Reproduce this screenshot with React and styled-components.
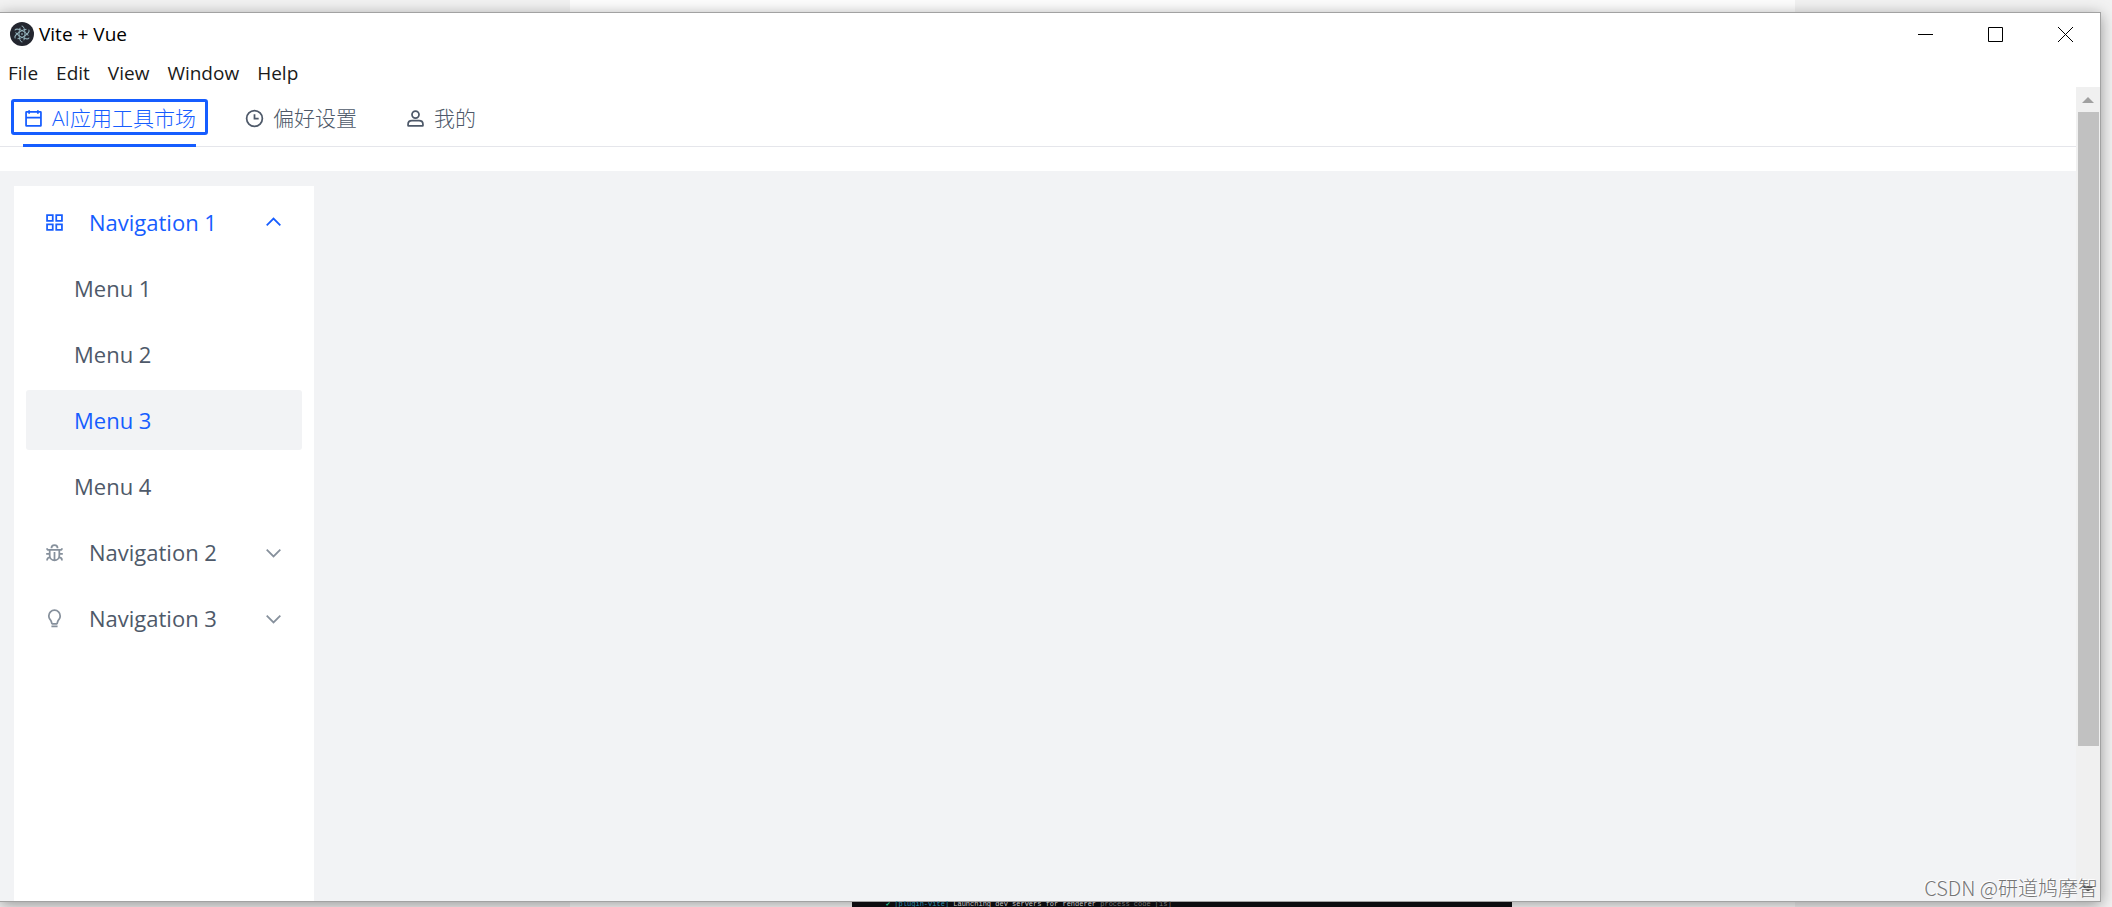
import React, { useState } from "react";
import styled, { createGlobalStyle } from "styled-components";

const BLUE = "#165dff";
const UI_FONT = '"Open Sans", "Noto Sans CJK SC", sans-serif';

const GlobalStyle = createGlobalStyle`
  *, *::before, *::after { box-sizing: border-box; }
  body { margin: 0; font-family: ${UI_FONT}; }
  button { font: inherit; color: inherit; background: none; border: 0; padding: 0; margin: 0; cursor: pointer; }
`;

const Desktop = styled.div`
  position: relative;
  display: flex;
  flex-direction: column;
  height: 100vh;
  padding: 12px 11px 0 0;
  overflow: hidden;
  background: linear-gradient(90deg, #f2f2f2 27%, #fdfdfd 27%, #fdfdfd 85%, #f2f2f2 85%);
`;

const Window = styled.div`
  position: relative;
  z-index: 1;
  flex: 1;
  min-height: 0;
  display: flex;
  flex-direction: column;
  background: #fff;
  border: 1px solid #a2a2a2;
  border-left: 0;
  box-shadow: 0 3px 14px rgba(0, 0, 0, 0.38);
`;

const TitleBar = styled.header`
  flex: none;
  display: flex;
  align-items: center;
  height: 42px;
  padding-left: 10px;
`;

const AppTitle = styled.h1`
  flex: 1;
  margin: 0 0 0 5px;
  font-size: 19px;
  line-height: 24px;
  font-weight: 400;
  color: #000;
`;

const CaptionButton = styled.button`
  display: flex;
  align-items: center;
  justify-content: center;
  width: 70px;
  height: 42px;
`;

const MenuBar = styled.nav`
  flex: none;
  display: flex;
  gap: 18px;
  height: 32px;
  padding-left: 8px;
  font-size: 19px;
  line-height: 36px;
  color: #1a1a1a;
`;

const Viewport = styled.div`
  flex: 1;
  min-height: 0;
  display: flex;
`;

const Page = styled.div`
  flex: 1;
  min-width: 0;
  display: flex;
  flex-direction: column;
`;

const TabBar = styled.div`
  flex: none;
  display: flex;
  gap: 24px;
  height: 60px;
  padding: 12px 11px 0;
  margin-bottom: 24px;
  border-bottom: 1px solid #e5e6eb;
`;

const TabItem = styled.div`
  position: relative;
  height: 48px;
  &::after {
    content: "";
    position: absolute;
    left: 12px;
    right: 12px;
    bottom: 0;
    height: 3px;
    background: ${(p) => (p.$active ? BLUE : "transparent")};
  }
`;

const TabButton = styled.button`
  display: flex;
  align-items: center;
  gap: 8px;
  height: 36px;
  padding: 2px 9px 0;
  border: 3px solid ${(p) => (p.$active ? BLUE : "transparent")};
  border-radius: 3px;
  font-size: 21px;
  line-height: 28px;
  font-weight: 300;
  white-space: nowrap;
  color: ${(p) => (p.$active ? BLUE : "#4e5969")};
`;

const Body = styled.div`
  flex: 1;
  min-height: 0;
  display: flex;
  padding: 15px 14px 0;
  background: #f2f3f5;
`;

const Sidebar = styled.nav`
  width: 300px;
  padding: 6px 12px;
  background: #fff;
`;

const MenuList = styled.ul`
  display: flex;
  flex-direction: column;
  gap: 6px;
  margin: 0;
  padding: 0;
  list-style: none;
`;

const SubList = styled(MenuList)`
  margin-top: 6px;
`;

const GroupButton = styled.button`
  display: flex;
  align-items: center;
  width: 100%;
  height: 60px;
  padding: 0 18px;
  font-size: 22px;
  line-height: 30px;
  text-align: left;
  color: ${(p) => (p.$active ? BLUE : "#4e5969")};
  svg { color: ${(p) => (p.$active ? BLUE : "#86909c")}; }
`;

const GroupLabel = styled.span`
  flex: 1;
  margin-left: 24px;
`;

const EntryButton = styled.button`
  width: 100%;
  height: 60px;
  padding: 0 18px 0 48px;
  border-radius: 3px;
  font-size: 22px;
  line-height: 30px;
  text-align: left;
  color: ${(p) => (p.$active ? BLUE : "#4e5969")};
  background: ${(p) => (p.$active ? "#f2f3f5" : "transparent")};
`;

const Scrollbar = styled.div`
  display: flex;
  flex-direction: column;
  width: 24px;
  background: #f0f0f0;
`;

const ScrollArrow = styled.button`
  flex: none;
  display: flex;
  align-items: center;
  justify-content: center;
  height: 25px;
  color: ${(p) => (p.$dark ? "#505050" : "#a0a0a0")};
`;

const ScrollTrack = styled.div`
  flex: 1;
  padding: 0 1px 0 2px;
`;

const ScrollThumb = styled.div`
  height: 83%;
  background: #c1c1c1;
`;

const DesktopEdge = styled.div`
  position: relative;
  z-index: 2;
  flex: none;
  display: flex;
  height: 5px;
  padding-left: 852px;
`;

const Terminal = styled.div`
  width: 660px;
  padding-left: 34px;
  background: #0c0c0f;
  font-family: "Liberation Mono", "DejaVu Sans Mono", monospace;
  font-size: 7px;
  line-height: 4px;
  white-space: pre;
  color: #c4c4c4;
`;

const Tone = styled.span`
  color: ${(p) => p.$color};
`;

const Watermark = styled.div`
  position: absolute;
  z-index: 3;
  right: 14px;
  bottom: 5px;
  font-family: "Noto Sans CJK SC", sans-serif;
  font-size: 20px;
  line-height: 28px;
  font-weight: 300;
  color: #757575;
  text-shadow: -1px -1px 0 #fff;
  pointer-events: none;
`;

const ICONS = {
  calendar: <path d="M7 22h34M14 5v8m20-8v8M8 41h32a1 1 0 0 0 1-1V10a1 1 0 0 0-1-1H8a1 1 0 0 0-1 1v30a1 1 0 0 0 1 1Z" />,
  clock: <path d="M24 14v10h9.5m8.5 0c0 9.941-8.059 18-18 18S6 33.941 6 24 14.059 6 24 6s18 8.059 18 18Z" />,
  user: (
    <>
      <path d="M7 37c0-4.97 4.03-8 9-8h16c4.97 0 9 3.03 9 8v3a1 1 0 0 1-1 1H8a1 1 0 0 1-1-1v-3Z" />
      <circle cx="24" cy="15" r="8" />
    </>
  ),
  apps: <path d="M7 7h13v13H7zM28 7h13v13H28zM7 28h13v13H7zM28 28h13v13H28z" />,
  bug: <path d="M24 42c-6.075 0-11-4.925-11-11V18h22v13c0 6.075-4.925 11-11 11Zm0 0V23m11 4h8M5 27h8M7 14a4 4 0 0 0 4 4h26a4 4 0 0 0 4-4m0 28v-.5a6.5 6.5 0 0 0-6.5-6.5M7 42v-.5a6.5 6.5 0 0 1 6.5-6.5M17 14a7 7 0 1 1 14 0" />,
  bulb: <path d="M17 42h14m6-24c0 2.823-.9 5.437-2.43 7.568-1.539 2.147-3.185 4.32-3.77 6.897l-.623 2.756A1 1 0 0 1 29.2 36H18.8a1 1 0 0 1-.976-.779l-.624-2.756c-.584-2.576-2.23-4.75-3.77-6.897A12.94 12.94 0 0 1 11 18c0-7.18 5.82-13 13-13s13 5.82 13 13Z" />,
  down: <path d="M39.6 17.443 24.043 33 8.487 17.443" />,
  up: <path d="M39.6 30.557 24.043 15 8.487 30.557" />,
};

function Icon({ name }) {
  return (
    <svg width="21" height="21" viewBox="0 0 48 48" fill="none" stroke="currentColor" strokeWidth="4" aria-hidden="true">
      {ICONS[name]}
    </svg>
  );
}

function ElectronLogo() {
  return (
    <svg width="24" height="24" viewBox="0 0 24 24" fill="none" aria-hidden="true">
      <circle cx="12" cy="12" r="12" fill="#23262f" />
      <g stroke="#a9ccd6" strokeWidth="1" opacity="0.85" strokeLinecap="round">
        <ellipse cx="12" cy="12" rx="8" ry="3" transform="rotate(30 12 12)" strokeDasharray="15 3" />
        <ellipse cx="12" cy="12" rx="8" ry="3" transform="rotate(-30 12 12)" strokeDasharray="15 3" />
        <ellipse cx="12" cy="12" rx="8" ry="3" transform="rotate(90 12 12)" strokeDasharray="15 3" />
      </g>
      <circle cx="12" cy="12" r="0.8" fill="#a9ccd6" />
    </svg>
  );
}

const CAPTIONS = [
  { label: "Minimize", d: "M0 7.5h15" },
  { label: "Maximize", d: "M.5.5h14v14H.5z" },
  { label: "Close", d: "M0 0l15 15M15 0L0 15" },
];

const TABS = [
  { icon: "calendar", label: "AI应用工具市场" },
  { icon: "clock", label: "偏好设置" },
  { icon: "user", label: "我的" },
];

const GROUPS = [
  { icon: "apps", label: "Navigation 1", items: ["Menu 1", "Menu 2", "Menu 3", "Menu 4"] },
  { icon: "bug", label: "Navigation 2", items: [] },
  { icon: "bulb", label: "Navigation 3", items: [] },
];

export default function App() {
  const [tab, setTab] = useState(0);
  const [open, setOpen] = useState(0);
  const [entry, setEntry] = useState("Menu 3");

  return (
    <>
      <GlobalStyle />
      <Desktop>
        <Window>
          <TitleBar>
            <ElectronLogo />
            <AppTitle>Vite + Vue</AppTitle>
            {CAPTIONS.map((c) => (
              <CaptionButton key={c.label} aria-label={c.label}>
                <svg width="15" height="15" viewBox="0 0 15 15" fill="none" stroke="#000">
                  <path d={c.d} />
                </svg>
              </CaptionButton>
            ))}
          </TitleBar>
          <MenuBar>
            {["File", "Edit", "View", "Window", "Help"].map((m) => (
              <button key={m}>{m}</button>
            ))}
          </MenuBar>
          <Viewport>
            <Page>
              <TabBar role="tablist">
                {TABS.map((t, i) => (
                  <TabItem key={t.label} $active={i === tab}>
                    <TabButton role="tab" aria-selected={i === tab} $active={i === tab} onClick={() => setTab(i)}>
                      <Icon name={t.icon} />
                      {t.label}
                    </TabButton>
                  </TabItem>
                ))}
              </TabBar>
              <Body>
                <Sidebar>
                  <MenuList>
                    {GROUPS.map((g, i) => (
                      <li key={g.label}>
                        <GroupButton $active={i === 0} aria-expanded={i === open} onClick={() => setOpen(i === open ? -1 : i)}>
                          <Icon name={g.icon} />
                          <GroupLabel>{g.label}</GroupLabel>
                          <Icon name={i === open ? "up" : "down"} />
                        </GroupButton>
                        {i === open && g.items.length > 0 && (
                          <SubList>
                            {g.items.map((m) => (
                              <li key={m}>
                                <EntryButton $active={m === entry} onClick={() => setEntry(m)}>
                                  {m}
                                </EntryButton>
                              </li>
                            ))}
                          </SubList>
                        )}
                      </li>
                    ))}
                  </MenuList>
                </Sidebar>
              </Body>
            </Page>
            <Scrollbar>
              <ScrollArrow aria-label="Scroll up">
                <svg width="12" height="6" viewBox="0 0 12 6" fill="currentColor"><path d="M0 6 6 0l6 6z" /></svg>
              </ScrollArrow>
              <ScrollTrack>
                <ScrollThumb />
              </ScrollTrack>
              <ScrollArrow $dark aria-label="Scroll down">
                <svg width="12" height="6" viewBox="0 0 12 6" fill="currentColor"><path d="M0 0l6 6 6-6z" /></svg>
              </ScrollArrow>
            </Scrollbar>
          </Viewport>
        </Window>
        <DesktopEdge>
          <Terminal>
            <Tone $color="#23c48e">✔ </Tone>
            <Tone $color="#2a8fb0">[plugin-vite]</Tone>
            {" Launching dev servers for renderer "}
            <Tone $color="#777">process code [1s]</Tone>
          </Terminal>
        </DesktopEdge>
        <Watermark>CSDN @研道鸠摩智</Watermark>
      </Desktop>
    </>
  );
}
